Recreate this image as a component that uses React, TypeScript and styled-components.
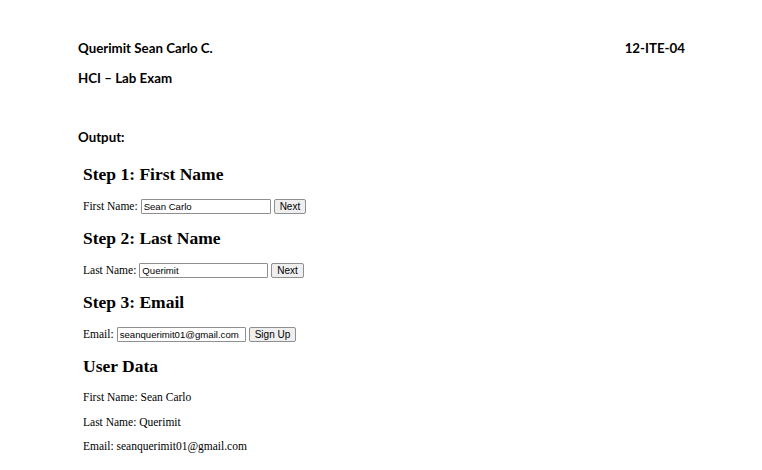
import styled, { createGlobalStyle } from "styled-components";

const GlobalStyle = createGlobalStyle`
  body {
    margin: 0;
    background: #ffffff;
    color: #000000;
  }
`;

const Page = styled.div`
  width: 762px;
  height: 470px;
  padding: 40px 77px 0 78px;
  box-sizing: border-box;
  font-family: Lato, "Open Sans", sans-serif;
`;

const DocLine = styled.div<{ $gap?: number }>`
  display: flex;
  justify-content: space-between;
  height: 16px;
  line-height: 16px;
  font-size: 13.3px;
  font-weight: 700;
  margin-top: ${(p) => p.$gap ?? 0}px;
`;

const Shot = styled.div`
  display: flex;
  flex-direction: column;
  margin-top: 19px;
  padding-left: 5px;
  font-family: "Liberation Serif", "Times New Roman", serif;
  font-size: 11.5px;
`;

const StepTitle = styled.h3<{ $gap?: number }>`
  margin: ${(p) => p.$gap ?? 14}px 0 0;
  height: 20px;
  line-height: 20px;
  font-size: 17.5px;
  font-weight: 700;
`;

const FormRow = styled.div`
  display: flex;
  align-items: center;
  height: 16px;
  margin-top: 14px;
`;

const Label = styled.label`
  margin-right: 3px;
`;

const TextInput = styled.input<{ $w: number }>`
  width: ${(p) => p.$w}px;
  height: 15px;
  box-sizing: border-box;
  border: 1px solid #8f8f8f;
  border-radius: 1px;
  padding: 0 1px 0 2px;
  font-family: "Liberation Sans", Arial, sans-serif;
  font-size: 9.6px;
  color: #000;
  outline: none;
`;

const Button = styled.button`
  height: 15px;
  margin-left: 3px;
  padding: 0 5px;
  box-sizing: border-box;
  border: 1px solid #8f8f8f;
  border-radius: 2px;
  background: #efefef;
  font-family: "Liberation Sans", Arial, sans-serif;
  font-size: 10px;
  line-height: 13px;
  color: #000;
`;

const DataLine = styled.p<{ $gap: number }>`
  margin: ${(p) => p.$gap}px 0 0;
  height: 14px;
  line-height: 14px;
`;

export default function App() {
  return (
    <Page>
      <GlobalStyle />
      <DocLine>
        <span>Querimit Sean Carlo C.</span>
        <span>12-ITE-04</span>
      </DocLine>
      <DocLine $gap={14}>
        <span>HCI – Lab Exam</span>
      </DocLine>
      <DocLine $gap={43}>
        <span>Output:</span>
      </DocLine>
      <Shot>
        <StepTitle $gap={0}>Step 1: First Name</StepTitle>
        <FormRow>
          <Label>First Name:</Label>
          <TextInput $w={130} defaultValue="Sean Carlo" />
          <Button>Next</Button>
        </FormRow>
        <StepTitle>Step 2: Last Name</StepTitle>
        <FormRow>
          <Label>Last Name:</Label>
          <TextInput $w={129} defaultValue="Querimit" />
          <Button>Next</Button>
        </FormRow>
        <StepTitle>Step 3: Email</StepTitle>
        <FormRow>
          <Label>Email:</Label>
          <TextInput $w={129} defaultValue="seanquerimit01@gmail.com" />
          <Button>Sign Up</Button>
        </FormRow>
        <StepTitle>User Data</StepTitle>
        <DataLine $gap={14}>First Name: Sean Carlo</DataLine>
        <DataLine $gap={11}>Last Name: Querimit</DataLine>
        <DataLine $gap={10}>Email: seanquerimit01@gmail.com</DataLine>
      </Shot>
    </Page>
  );
}
